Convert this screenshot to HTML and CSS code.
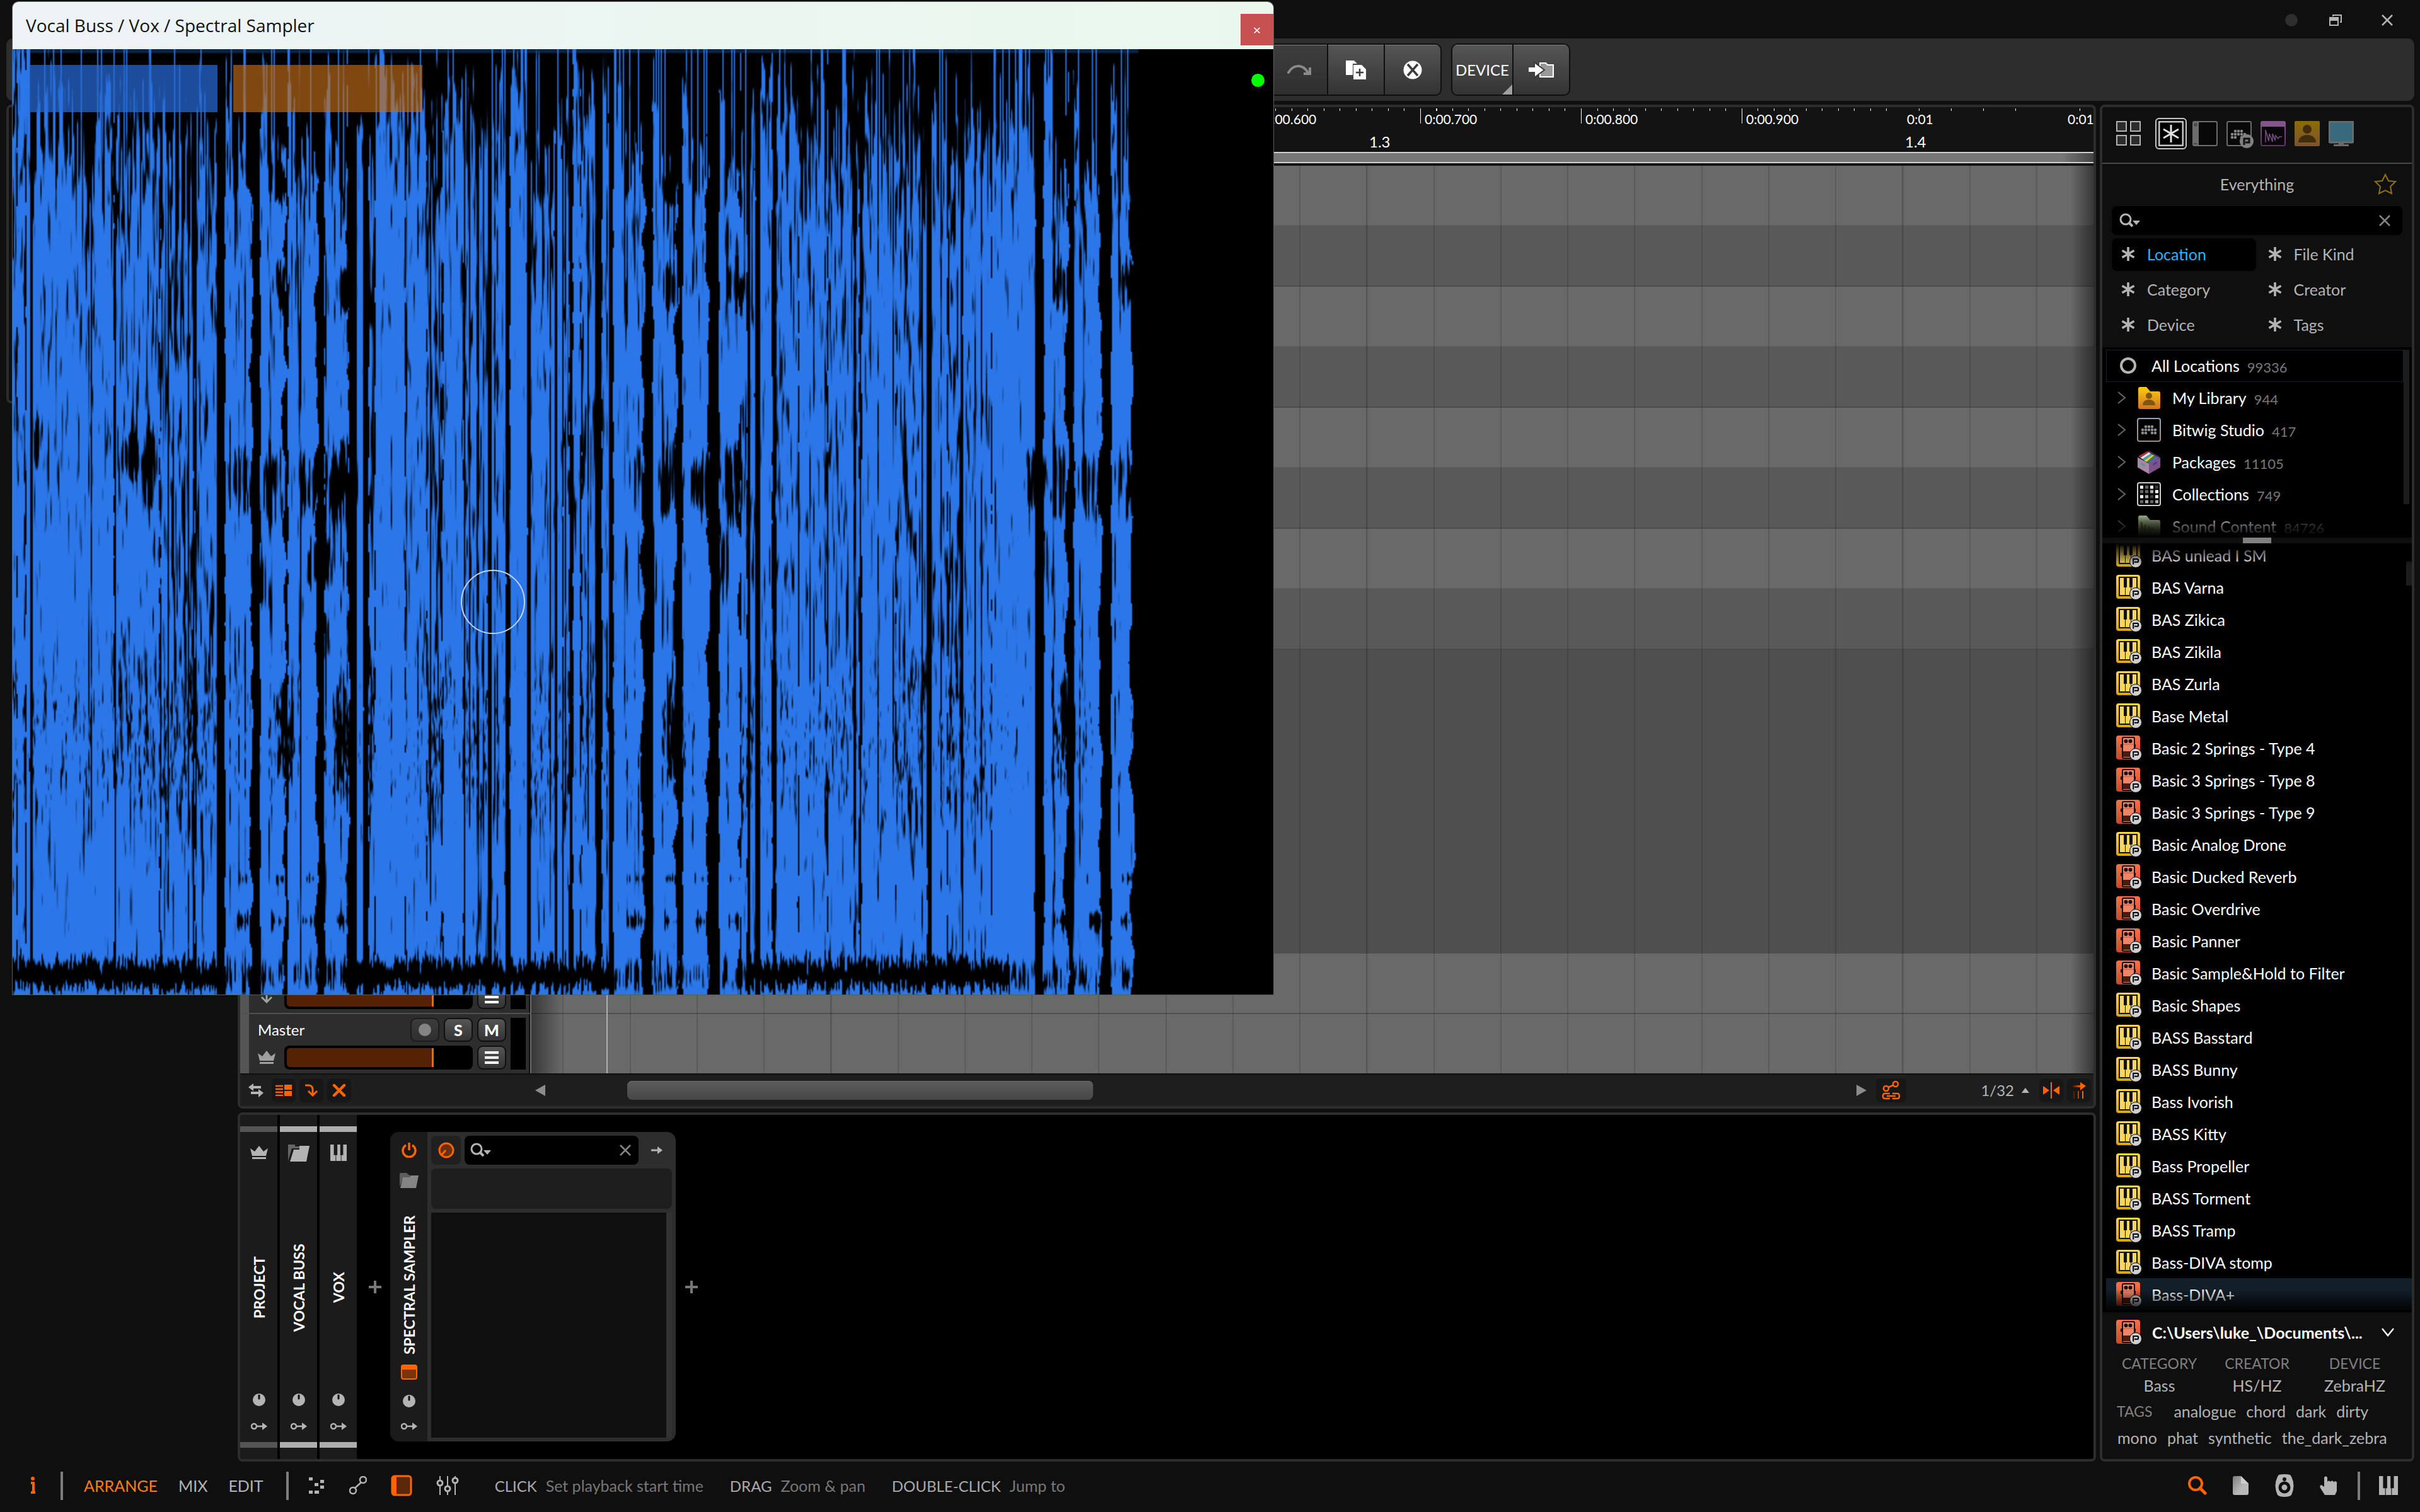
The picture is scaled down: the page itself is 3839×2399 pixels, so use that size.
FILE: index.html
```html
<!DOCTYPE html>
<html lang="en">

<head>
  <meta charset="UTF-8">
  <meta name="viewport" content="width=device-width, initial-scale=1">
  <title>Spectral Sampler</title>
  <link rel="stylesheet" href="styles.css">
</head>

<body>

  <!-- Icon set -->
  <svg class="defs" aria-hidden="true">
    <defs>
      <linearGradient id="gYellow" x1="0" y1="0" x2="0" y2="1"><stop offset="0" stop-color="#ffd940"/><stop offset="1" stop-color="#d8a800"/></linearGradient>
      <linearGradient id="gRed" x1="0" y1="0" x2="0" y2="1"><stop offset="0" stop-color="#fb7048"/><stop offset="1" stop-color="#c9482a"/></linearGradient>
      <linearGradient id="gLib" x1="0" y1="0" x2="0" y2="1"><stop offset="0" stop-color="#ffcc0c"/><stop offset="1" stop-color="#cf7426"/></linearGradient>
      <linearGradient id="gUser" x1="0" y1="0" x2="0" y2="1"><stop offset="0" stop-color="#8a6d06"/><stop offset="1" stop-color="#7e5230"/></linearGradient>
      <linearGradient id="gBit" x1="0" y1="0" x2="0" y2="1"><stop offset="0" stop-color="#8fa6c0"/><stop offset="1" stop-color="#a68a78"/></linearGradient>
      <linearGradient id="gPurple" x1="0" y1="0" x2="0" y2="1"><stop offset="0" stop-color="#835689"/><stop offset="1" stop-color="#60346a"/></linearGradient>
      <linearGradient id="gGreen" x1="0" y1="0" x2="0" y2="1"><stop offset="0" stop-color="#bdd0a4"/><stop offset="1" stop-color="#4f6041"/></linearGradient>
      <linearGradient id="gDoc" x1="0" y1="0" x2="1" y2="1"><stop offset="0" stop-color="#7c7c7c"/><stop offset=".6" stop-color="#b8b8b8"/></linearGradient>
      <linearGradient id="gFade" x1="0" y1="0" x2="1" y2="0"><stop offset="0" stop-color="#ff6400" stop-opacity="0"/><stop offset="1" stop-color="#ff6400"/></linearGradient>
    </defs>
    <symbol id="badge" viewBox="0 0 20 20">
      <circle cx="10" cy="10" r="9.5" fill="#cfcfcf" stroke="#000" stroke-width="1"/>
      <path d="M6.2 14.5V6h6.3a1.6 1.6 0 0 1 1.6 1.6v1.6a1.6 1.6 0 0 1-1.6 1.6H8" fill="none" stroke="#000" stroke-width="2"/>
    </symbol>
    <symbol id="keys" viewBox="0 0 42 42">
      <rect x="0" y="1" width="38" height="38" rx="4" fill="url(#gYellow)"/>
      <rect x="5" y="5" width="28" height="29" fill="#f6d65c" stroke="#14100a" stroke-width="2"/>
      <path d="M14.500 20v14M23.500 20v14" stroke="#14100a" stroke-width="1"/>
      <path d="M12 6h5v15h-5zM21 6h5v15h-5z" fill="#14100a"/>
      <use href="#badge" x="21" y="21" width="20" height="20"/>
    </symbol>
    <symbol id="pedal" viewBox="0 0 42 42">
      <rect x="0" y="1" width="38" height="38" rx="4" fill="url(#gRed)"/>
      <path d="M7 15h4v5H7zM27 15h4v5h-4z" fill="#180a06"/>
      <rect x="10" y="4" width="19" height="33" rx="2" fill="#ee8468" stroke="#180a06" stroke-width="2"/>
      <circle cx="15.500" cy="10" r="3" fill="#180a06"/><circle cx="22.500" cy="10" r="3" fill="#180a06"/>
      <path d="M11 15h17" stroke="#b55a42"/>
      <path d="M11 26h17v9H11z" fill="#4a1c10"/>
      <use href="#badge" x="21" y="21" width="20" height="20"/>
    </symbol>
    <symbol id="asterisk" viewBox="0 0 22 22"><path d="M11 0v22M1.500 5.500l19 11M1.500 16.500l19-11" stroke="currentColor" stroke-width="3.600"/></symbol>
    <symbol id="search" viewBox="0 0 34 24">
      <circle cx="10" cy="10" r="8" fill="none" stroke="currentColor" stroke-width="3"/>
      <path d="M15 15l6 6" stroke="currentColor" stroke-width="4"/><path d="M21 12h12l-6 7z" fill="currentColor"/>
    </symbol>
    <symbol id="cross" viewBox="0 0 20 20"><path d="M2 2l16 16M18 2L2 18" stroke="currentColor" stroke-width="2.500"/></symbol>
    <symbol id="chev" viewBox="0 0 14 20"><path d="M1 1l11 9-11 9" fill="none" stroke="currentColor" stroke-width="2"/></symbol>
    <symbol id="crown" viewBox="0 0 28 22"><path d="M0 4l7 5 7-9 7 9 7-5-3 12H3zM3 18h22v3H3z" fill="currentColor"/></symbol>
    <symbol id="folder" viewBox="0 0 34 28"><path d="M0 27V1h11v3h7v3H6z" fill="#666"/><path d="M3 28L9 9h9V3h16l-5 25z" fill="currentColor"/></symbol>
    <symbol id="folder2" viewBox="0 0 30 24"><path d="M0 22V2a2 2 0 0 1 2-2h9l5 4h9v5H5z" fill="#5c5c5c"/><path d="M1 24L5 7h11l2-3h12l-4 20z" fill="currentColor"/></symbol>
    <symbol id="piano" viewBox="0 0 28 28"><path d="M0 0h6v18h3v10H0zM10 28V18h2V0h5v18h1v10zM19 28V18h3V0h6v28z" fill="currentColor"/></symbol>
    <symbol id="knob" viewBox="0 0 20 20"><circle cx="10" cy="10" r="10" fill="currentColor"/><path d="M10 3v5" stroke="#111" stroke-width="3" stroke-linecap="round"/></symbol>
    <symbol id="route" viewBox="0 0 26 12"><circle cx="5" cy="6" r="4" fill="none" stroke="currentColor" stroke-width="2.500"/><path d="M9 6h11" stroke="currentColor" stroke-width="2.500"/><path d="M18 0l8 6-8 6z" fill="currentColor"/></symbol>
    <symbol id="plus" viewBox="0 0 20 20"><path d="M10 0v20M0 10h20" stroke="currentColor" stroke-width="4"/></symbol>
    <symbol id="menu" viewBox="0 0 22 22"><path d="M0 3h22M0 11h22M0 19h22" stroke="currentColor" stroke-width="4"/></symbol>
    <symbol id="bitdots" viewBox="0 0 26 16">
      <g fill="currentColor">
        <circle cx="8" cy="3" r="2.300"/><circle cx="13" cy="3" r="2.300"/><circle cx="18" cy="3" r="2.300"/>
        <circle cx="3" cy="8" r="2.300"/><circle cx="8" cy="8" r="2.300"/><circle cx="13" cy="8" r="2.300"/><circle cx="18" cy="8" r="2.300"/><circle cx="23" cy="8" r="2.300"/>
        <circle cx="3" cy="13" r="2.300"/><circle cx="8" cy="13" r="2.300"/><circle cx="18" cy="13" r="2.300"/><circle cx="23" cy="13" r="2.300"/>
      </g>
    </symbol>
  </svg>

  <header class="titlebar">
    <button class="win-btn" aria-label="Minimize"><svg width="20" height="20" viewBox="0 0 20 20"><circle cx="10" cy="10" r="10" fill="#2e2e2e"/></svg></button>
    <button class="win-btn" aria-label="Restore"><svg width="20" height="20" viewBox="0 0 20 20"><path d="M6 4V2h13v11h-2" fill="none" stroke="#b4b4b4" stroke-width="2"/><path d="M1 6h13v12H1z" fill="none" stroke="#b4b4b4" stroke-width="2"/><path d="M1 6h13v5H1z" fill="#b4b4b4"/></svg></button>
    <button class="win-btn" aria-label="Close"><svg class="c-light" width="20" height="20"><use href="#cross"/></svg></button>
  </header>

  <div class="toolbar">
    <div class="btn-group">
      <button class="dim" aria-label="Undo"></button>
      <button class="dim" aria-label="Redo"><svg width="38" height="18" viewBox="0 0 38 18"><path d="M2 13C9 1 23-2 33 13" fill="none" stroke="#8a8a8a" stroke-width="4" stroke-linecap="round"/><path d="M26 15h10V5" fill="none" stroke="#8a8a8a" stroke-width="4"/></svg></button>
      <button aria-label="Duplicate"><svg width="34" height="32" viewBox="0 0 34 32"><path d="M1 1h13l5 5h-7v18H1z" fill="#fff"/><path d="M13 8h13l7 7v16H13z" fill="#fff"/><path d="M23 14v12M17 20h12" stroke="#3c3c3c" stroke-width="2.500"/></svg></button>
      <button aria-label="Delete"><svg width="30" height="30" viewBox="0 0 30 30"><circle cx="15" cy="15" r="14.500" fill="#fff"/><path d="M7 6l16 18M23 6L7 24" stroke="#3c3c3c" stroke-width="3.500"/></svg></button>
    </div>
    <div class="btn-group">
      <button class="device-btn">DEVICE</button>
      <button aria-label="Insert"><svg width="40" height="26" viewBox="0 0 40 26"><path d="M18 2h9l3 3h9v19H18z" fill="#999" stroke="#fff" stroke-width="2"/><path d="M9 1l16 12L9 25z" fill="#fff" stroke="#3c3c3c" stroke-width="2"/><path d="M0 9h11v7H0z" fill="#fff"/></svg></button>
    </div>
  </div>

  <main class="workspace">
    <aside class="inspector panel"></aside>

    <section class="center">
      <div class="arranger panel">
        <div class="ruler">
          <div class="seconds">
            <span>0:00.600</span><span>0:00.700</span><span>0:00.800</span><span>0:00.900</span><span class="wide">0:01</span><span class="wide">0:01</span>
          </div>
          <div class="beat-labels"><span>1.3</span><span>1.4</span></div>
          <div class="loop-bar"></div>
        </div>
        <div class="lanes">
          <div class="lane"></div>
          <div class="lane odd"></div>
          <div class="lane"></div>
          <div class="lane odd"></div>
          <div class="lane"></div>
          <div class="lane odd"></div>
          <div class="lane"></div>
          <div class="lane odd"></div>
          <div class="lane empty"></div>
          <div class="lane lined">
            <div class="track">
              <span class="track-name">FX</span>
              <div class="track-btns"><button class="sq">S</button><button class="sq">M</button></div>
              <svg class="c-grey" width="28" height="22" viewBox="0 0 28 22"><path d="M14 0v19M6 11l8 8 8-8" fill="none" stroke="currentColor" stroke-width="3"/></svg>
              <div class="fader"><div class="fill"></div></div>
              <button class="sq" aria-label="Options"><svg width="22" height="22"><use href="#menu"/></svg></button>
              <div class="meter"></div>
            </div>
          </div>
          <div class="lane lined last">
            <div class="track">
              <span class="track-name">Master</span>
              <div class="track-btns">
                <button class="sq off" aria-label="Record"><svg width="20" height="20"><circle cx="10" cy="10" r="10" fill="#848484"/></svg></button>
                <button class="sq">S</button>
                <button class="sq">M</button>
              </div>
              <svg class="c-grey" width="28" height="22"><use href="#crown"/></svg>
              <div class="fader"><div class="fill"></div></div>
              <button class="sq" aria-label="Options"><svg width="22" height="22"><use href="#menu"/></svg></button>
              <div class="meter"></div>
            </div>
          </div>
          <div class="grid-lines">
            <div class="beats"><i></i><i></i><i></i><i></i></div>
            <div class="playhead"></div>
          </div>
        </div>
        <div class="arr-bar">
          <button class="flat" aria-label="Swap"><svg class="c-light" width="24" height="22" viewBox="0 0 24 22"><path d="M0 6l8-6v4h12v4H8v4zM24 15l-8-6v4H4v4h12v5z" fill="currentColor"/></svg></button>
          <button class="flat on" aria-label="Tracks"><svg width="26" height="18" viewBox="0 0 26 18"><path d="M0 2h12M0 7h12M0 12h12M0 17h12" stroke="currentColor" stroke-width="2.500"/><path d="M14 0h12v8H14zM14 10h12v8H14z" fill="currentColor"/></svg></button>
          <button class="flat on" aria-label="Follow"><svg width="22" height="20" viewBox="0 0 22 20"><path d="M1 2h6c4 0 6 3 6 7v8M6 11l7 7 7-7" fill="none" stroke="currentColor" stroke-width="3"/></svg></button>
          <button class="flat on" aria-label="Clear"><svg width="22" height="20" viewBox="0 0 22 20"><path d="M3 2l16 16M19 2L3 18" stroke="currentColor" stroke-width="4.500" stroke-linecap="round"/></svg></button>
          <svg class="tri-left" width="16" height="18" viewBox="0 0 16 18"><path d="M16 0v18L0 9z" fill="#8c8c8c"/></svg>
          <div class="scroll"><div class="thumb"></div></div>
          <svg width="16" height="18" viewBox="0 0 16 18"><path d="M0 0v18l16-9z" fill="#8c8c8c"/></svg>
          <button class="flat on link" aria-label="Link automation"><svg width="30" height="32" viewBox="0 0 30 32"><g fill="none" stroke="currentColor" stroke-width="2.500"><circle cx="7" cy="13" r="4"/><circle cx="22" cy="6" r="4"/><path d="M11 11l7-3M13 21H5a3 3 0 0 0-3 3v2a3 3 0 0 0 3 3h8M17 21h8a3 3 0 0 1 3 3v2a3 3 0 0 1-3 3h-8M8 25h14"/></g></svg></button>
          <button class="snap">1/32 <svg width="12" height="8" viewBox="0 0 12 8"><path d="M0 8l6-8 6 8z" fill="currentColor"/></svg></button>
          <button class="flat on" aria-label="Snap"><svg width="26" height="26" viewBox="0 0 26 26"><path d="M0 6l10 7-10 7zM26 6l-10 7 10 7z" fill="currentColor"/><path d="M13 0v26" stroke="currentColor" stroke-width="2"/></svg></button>
          <button class="flat on" aria-label="Snap offset"><svg width="22" height="26" viewBox="0 0 22 26"><path d="M0 5h14v3H0z" fill="url(#gFade)"/><path d="M13 0l9 6-9 7z" fill="currentColor"/><path d="M3 14v12" stroke="#50250a" stroke-width="2"/><path d="M10 14v12" stroke="#a8480a" stroke-width="2"/><path d="M17 14v12" stroke="currentColor" stroke-width="2"/></svg></button>
        </div>
      </div>

      <div class="devices panel">
        <div class="strip">
          <svg width="28" height="28" viewBox="0 -3 28 28"><use href="#crown" width="28" height="22"/></svg>
          <span class="vtext">PROJECT</span>
          <svg width="20" height="20"><use href="#knob"/></svg>
          <svg width="26" height="12"><use href="#route"/></svg>
        </div>
        <div class="strip lit">
          <svg width="34" height="28"><use href="#folder"/></svg>
          <span class="vtext">VOCAL BUSS</span>
          <svg width="20" height="20"><use href="#knob"/></svg>
          <svg width="26" height="12"><use href="#route"/></svg>
        </div>
        <div class="strip lit">
          <svg width="26" height="28"><use href="#piano"/></svg>
          <span class="vtext">VOX</span>
          <svg width="20" height="20"><use href="#knob"/></svg>
          <svg width="26" height="12"><use href="#route"/></svg>
        </div>
        <button class="add" aria-label="Add device before"><svg width="20" height="20"><use href="#plus"/></svg></button>
        <div class="device">
          <div class="device-side">
            <svg class="c-orange" width="24" height="24" viewBox="0 0 24 24"><path d="M7 4a10 10 0 1 0 10 0M12 0v12" fill="none" stroke="currentColor" stroke-width="3.500"/></svg>
            <svg class="c-mid" width="30" height="24"><use href="#folder2"/></svg>
            <span class="vtext">SPECTRAL SAMPLER</span>
            <svg width="26" height="24" viewBox="0 0 26 24"><rect x="1" y="1" width="24" height="22" rx="3" fill="#7a340c" stroke="#ff6400" stroke-width="2"/><path d="M1 2h24v6H1z" fill="#ff6400"/></svg>
            <svg width="20" height="20"><use href="#knob"/></svg>
            <svg width="26" height="12"><use href="#route"/></svg>
          </div>
          <div class="device-main">
            <div class="device-top">
              <button class="learn" aria-label="Remote controls"><svg width="26" height="26" viewBox="0 0 26 26"><circle cx="13" cy="13" r="11" fill="#6b3012" stroke="#ff6400" stroke-width="3"/><path d="M6 20l6-7" stroke="#ff6400" stroke-width="3"/></svg></button>
              <label class="search-box"><svg width="34" height="24"><use href="#search"/></svg><input type="text" aria-label="Search parameters"><svg width="20" height="20"><use href="#cross"/></svg></label>
              <svg class="c-light" width="18" height="12" viewBox="0 0 18 12"><path d="M0 6h12" stroke="currentColor" stroke-width="3"/><path d="M10 0l8 6-8 6z" fill="currentColor"/></svg>
            </div>
            <div class="device-slot"></div>
            <div class="device-list"></div>
          </div>
        </div>
        <button class="add" aria-label="Add device after"><svg width="20" height="20"><use href="#plus"/></svg></button>
      </div>
    </section>

    <aside class="browser panel">
      <nav class="tabs">
        <button aria-label="Grid"><svg width="40" height="40" viewBox="0 0 40 40"><path d="M1 1h15v15H1zM23 1h15v15H23zM1 23h15v15H1zM23 23h15v15H23z" fill="#2d2d2d" stroke="#b4b4b4" stroke-width="2"/></svg></button>
        <button class="sel" aria-label="Everything"><svg width="40" height="40" viewBox="0 0 40 40"><rect x="1" y="1" width="38" height="38" rx="2" fill="#000" stroke="#c4c4c4" stroke-width="3"/><path d="M20 6v28M8 13l24 14M8 27l24-14" stroke="#e0e0e0" stroke-width="3"/></svg></button>
        <button aria-label="Devices"><svg width="40" height="40" viewBox="0 0 40 40"><rect x="1" y="1" width="38" height="38" rx="2" fill="#080808" stroke="#6c6c6c" stroke-width="2"/><path d="M1 1h9v38H1z" fill="#6c6c6c"/><circle cx="5" cy="6" r="2" fill="none" stroke="#222"/><path d="M2 36h5" stroke="#222"/></svg></button>
        <button aria-label="Presets"><svg width="44" height="44" viewBox="0 0 44 44"><rect x="1" y="1" width="38" height="38" rx="2" fill="#080808" stroke="#6c6c6c" stroke-width="2"/><use class="c-mid" href="#bitdots" x="6" y="13" width="26" height="16"/><circle cx="32" cy="32" r="11" fill="#808080"/><path d="M28 38V28h8v6h-6" fill="none" stroke="#111" stroke-width="3"/></svg></button>
        <button aria-label="Samples"><svg width="40" height="40" viewBox="0 0 40 40"><rect x="1" y="1" width="38" height="38" rx="2" fill="#080808" stroke="url(#gPurple)" stroke-width="2"/><path d="M1 1h38v8H1z" fill="#835689"/><path d="M8 34V14l5 18 1-12 5 13V20l4 10 1-7 4 5 2-3 4 0" fill="none" stroke="#7b4a82" stroke-width="1.500"/></svg></button>
        <button aria-label="User"><svg width="40" height="40" viewBox="0 0 40 40"><rect width="40" height="40" rx="2" fill="url(#gUser)"/><circle cx="20" cy="13" r="7" fill="#3f2d0d"/><path d="M6 34c0-16 28-16 28 0z" fill="#3f2d0d"/></svg></button>
        <button aria-label="Computer"><svg width="40" height="40" viewBox="0 0 40 40"><rect x="1" y="1" width="38" height="33" rx="2" fill="#38697c" stroke="#6c6c6c" stroke-width="3"/><path d="M16 34h8v3h8v3H8v-3h8z" fill="#6c6c6c"/></svg></button>
      </nav>

      <div class="heading">
        <span>Everything</span>
        <button aria-label="Favorite"><svg width="36" height="34" viewBox="0 0 36 34"><path d="M18 2l5 10 11 1-8 8 2 11-10-5-10 5 2-11-8-8 11-1z" fill="none" stroke="#907112" stroke-width="2"/></svg></button>
      </div>

      <label class="search-box big"><svg width="34" height="24"><use href="#search"/></svg><input type="text" aria-label="Search browser"><svg width="20" height="20"><use href="#cross"/></svg></label>

      <div class="filters">
        <button class="active"><svg width="22" height="22"><use href="#asterisk"/></svg>Location</button>
        <button><svg width="22" height="22"><use href="#asterisk"/></svg>File Kind</button>
        <button><svg width="22" height="22"><use href="#asterisk"/></svg>Category</button>
        <button><svg width="22" height="22"><use href="#asterisk"/></svg>Creator</button>
        <button><svg width="22" height="22"><use href="#asterisk"/></svg>Device</button>
        <button><svg width="22" height="22"><use href="#asterisk"/></svg>Tags</button>
      </div>

      <ul class="locations">
        <li class="all"><svg width="26" height="26"><circle cx="13" cy="13" r="11" fill="none" stroke="#b4b4b4" stroke-width="4"/></svg>All Locations <small>99336</small></li>
        <li><svg class="c-dim" width="14" height="20"><use href="#chev"/></svg><svg class="ico" width="38" height="38" viewBox="0 0 38 38"><path d="M2 34V5a3 3 0 0 1 3-3h10l6 7h13a3 3 0 0 1 3 3v22a3 3 0 0 1-3 3H5a3 3 0 0 1-3-3z" fill="url(#gLib)"/><circle cx="19" cy="16" r="5" fill="#7d5710"/><path d="M9 31c0-12 20-12 20 0z" fill="#7d5710"/></svg>My Library <small>944</small></li>
        <li><svg class="c-dim" width="14" height="20"><use href="#chev"/></svg><svg class="ico" width="38" height="38" viewBox="0 0 38 38"><rect x="1" y="1" width="36" height="36" rx="3" fill="#000" stroke="url(#gBit)" stroke-width="2"/><use class="c-bit" href="#bitdots" x="6" y="11" width="26" height="16"/></svg>Bitwig Studio <small>417</small></li>
        <li><svg class="c-dim" width="14" height="20"><use href="#chev"/></svg><svg class="ico" width="40" height="40" viewBox="0 0 40 40"><path d="M2 11L20 1l18 10-18 12z" fill="#4a2b52"/><path d="M3 10L17 2l4 2L6 13z" fill="#b03040"/><path d="M6 13l14-9 3 2L9 15z" fill="#eee"/><path d="M9 15l14-9 3 2-14 10z" fill="#4aa3a8"/><path d="M12 18l14-10 3 1-13 11z" fill="#e8c83a"/><path d="M16 20L29 9l3 2-13 11z" fill="#3f7a58"/><path d="M19 22l13-11 6 1-17 12z" fill="#5b62b8"/><path d="M1 12l19 11v17L1 29z" fill="#a787a8"/><path d="M39 12L20 23v17l19-11z" fill="#7c5288"/><path d="M7 21l6 4v3l-6-4z" fill="#39a088"/><path d="M27 23l6-4v3l-6 4z" fill="#3c3f90"/></svg>Packages <small>11105</small></li>
        <li><svg class="c-dim" width="14" height="20"><use href="#chev"/></svg><svg class="ico" width="38" height="38" viewBox="0 0 38 38"><rect x="1" y="1" width="36" height="36" rx="3" fill="#000" stroke="#ccc" stroke-width="2"/><path d="M5 8h5M21 8h5M29 15h5M5 23h5M29 23h5" stroke="#fff" stroke-width="5"/><path d="M13 8h5M5 15h5M13 15h5M5 31h5M21 31h5" stroke="#666" stroke-width="5"/><path d="M21 15h5M13 23h5M29 31h5M13 31h5" stroke="#aaa" stroke-width="5"/><path d="M29 8h5M21 23h5" stroke="#3c3c3c" stroke-width="5"/></svg>Collections <small>749</small></li>
        <li><svg class="c-dim" width="14" height="20"><use href="#chev"/></svg><svg class="ico" width="38" height="38" viewBox="0 0 38 38"><path d="M2 34V5a3 3 0 0 1 3-3h10l6 7h13a3 3 0 0 1 3 3v22a3 3 0 0 1-3 3H5a3 3 0 0 1-3-3z" fill="url(#gGreen)"/><path d="M7 32V12l4 19 2-15 3 15 3-12 2 9 3-6 2 3h5" fill="none" stroke="#4f6a3a" stroke-width="2"/></svg>Sound Content <small>84726</small></li>
      </ul>

      <div class="splitter"><i></i></div>

      <ul class="results">
        <li><svg><use href="#keys"/></svg>BAS unlead I SM</li>
        <li><svg><use href="#keys"/></svg>BAS Varna</li>
        <li><svg><use href="#keys"/></svg>BAS Zikica</li>
        <li><svg><use href="#keys"/></svg>BAS Zikila</li>
        <li><svg><use href="#keys"/></svg>BAS Zurla</li>
        <li><svg><use href="#keys"/></svg>Base Metal</li>
        <li><svg><use href="#pedal"/></svg>Basic 2 Springs - Type 4</li>
        <li><svg><use href="#pedal"/></svg>Basic 3 Springs - Type 8</li>
        <li><svg><use href="#pedal"/></svg>Basic 3 Springs - Type 9</li>
        <li><svg><use href="#keys"/></svg>Basic Analog Drone</li>
        <li><svg><use href="#pedal"/></svg>Basic Ducked Reverb</li>
        <li><svg><use href="#pedal"/></svg>Basic Overdrive</li>
        <li><svg><use href="#pedal"/></svg>Basic Panner</li>
        <li><svg><use href="#pedal"/></svg>Basic Sample&amp;Hold to Filter</li>
        <li><svg><use href="#keys"/></svg>Basic Shapes</li>
        <li><svg><use href="#keys"/></svg>BASS Basstard</li>
        <li><svg><use href="#keys"/></svg>BASS Bunny</li>
        <li><svg><use href="#keys"/></svg>Bass Ivorish</li>
        <li><svg><use href="#keys"/></svg>BASS Kitty</li>
        <li><svg><use href="#keys"/></svg>Bass Propeller</li>
        <li><svg><use href="#keys"/></svg>BASS Torment</li>
        <li><svg><use href="#keys"/></svg>BASS Tramp</li>
        <li><svg><use href="#keys"/></svg>Bass-DIVA stomp</li>
        <li class="picked"><svg><use href="#pedal"/></svg>Bass-DIVA+</li>
      </ul>

      <div class="info">
        <div class="info-head">
          <svg width="42" height="42"><use href="#pedal"/></svg>
          <strong>C:\Users\luke_\Documents\...</strong>
          <button aria-label="Collapse"><svg width="20" height="14" viewBox="0 0 20 14"><path d="M1 1l9 11 9-11" fill="none" stroke="#fff" stroke-width="2.500"/></svg></button>
        </div>
        <dl class="meta">
          <div><dt>CATEGORY</dt><dd>Bass</dd></div>
          <div><dt>CREATOR</dt><dd>HS/HZ</dd></div>
          <div><dt>DEVICE</dt><dd>ZebraHZ</dd></div>
        </dl>
        <div class="tags">
          <span class="tags-label">TAGS</span><span>analogue</span><span>chord</span><span>dark</span><span>dirty</span>
        </div>
        <div class="tags"><span>mono</span><span>phat</span><span>synthetic</span><span>the_dark_zebra</span></div>
      </div>
    </aside>
  </main>

  <footer class="statusbar">
    <button class="info-btn" aria-label="Info"><svg width="8" height="28" viewBox="0 0 8 28"><circle cx="4" cy="3" r="3" fill="#ff6400"/><path d="M1 10h4v14M1 25h7" fill="none" stroke="#ff6400" stroke-width="4"/></svg></button>
    <i class="sep"></i>
    <button class="view on">ARRANGE</button>
    <button class="view">MIX</button>
    <button class="view">EDIT</button>
    <i class="sep"></i>
    <div class="foot-icons">
      <svg width="26" height="26" viewBox="0 0 26 26"><path d="M0 0h6v5H0zM9 9h6v5H9zM18 4h6v5h-6zM18 13h6v5h-6zM0 21h6v5H0zM9 21h7v5H9z" fill="currentColor"/></svg>
      <svg width="28" height="30" viewBox="0 0 28 30"><g fill="none" stroke="currentColor" stroke-width="2.500"><circle cx="6" cy="23" r="5"/><circle cx="22" cy="6" r="5"/><path d="M9 19l10-9"/></g></svg>
      <svg width="34" height="34" viewBox="0 0 34 34"><rect x="2" y="2" width="30" height="30" rx="4" fill="#5a2708" stroke="#ff6400" stroke-width="3"/><path d="M2 3h7v28H2z" fill="#ff6400"/></svg>
      <svg width="36" height="30" viewBox="0 0 36 30"><path d="M6 0v30M18 0v30M30 0v30" stroke="currentColor" stroke-width="2"/><g fill="#0f0f0f" stroke="currentColor" stroke-width="3"><circle cx="6" cy="11" r="4"/><circle cx="18" cy="20" r="4"/><circle cx="30" cy="7" r="4"/></g></svg>
    </div>
    <p class="hint"><b>CLICK</b>Set playback start time</p>
    <p class="hint"><b>DRAG</b>Zoom &amp; pan</p>
    <p class="hint"><b>DOUBLE-CLICK</b>Jump to</p>
    <div class="foot-right">
      <svg class="c-orange" width="30" height="30" viewBox="0 0 30 30"><circle cx="12" cy="12" r="10" fill="none" stroke="currentColor" stroke-width="4"/><path d="M19 19l8 8" stroke="currentColor" stroke-width="5" stroke-linecap="round"/></svg>
      <svg width="26" height="30" viewBox="0 0 26 30"><path d="M3 0h10l12 12v15a3 3 0 0 1-3 3H3a3 3 0 0 1-3-3V3a3 3 0 0 1 3-3z" fill="url(#gDoc)"/><path d="M13 0v12h12z" fill="#ccc"/></svg>
      <svg width="30" height="36" viewBox="0 0 30 36"><path d="M6 1q9-2 18 0l2 3q7 14 0 29l-3 2q-8 2-16 0l-3-2q-7-15 0-29z" fill="currentColor"/><circle cx="15" cy="8" r="3" fill="#0f0f0f"/><circle cx="15" cy="21" r="7" fill="none" stroke="#0f0f0f" stroke-width="5"/></svg>
      <svg width="28" height="30" viewBox="0 0 28 30"><path d="M7 17V3a2.500 2.500 0 0 1 5 0v7a2.500 2.500 0 0 1 5 0 2.500 2.500 0 0 1 5 0 2.500 2.500 0 0 1 5 2v12l-3 6H8L1 19c-2-4 1-6 3-4z" fill="currentColor"/></svg>
      <i class="sep"></i>
      <svg width="30" height="30"><use href="#piano"/></svg>
    </div>
  </footer>

  <!-- Floating plugin window -->
  <div class="plugin">
    <div class="plugin-title">
      <span>Vocal Buss / Vox / Spectral Sampler</span>
      <button aria-label="Close plugin">×</button>
    </div>
    <div class="plugin-body">
      <canvas id="spectrum" width="1000" height="500"></canvas>
      <div class="region blue"></div>
      <div class="region orange"></div>
      <div class="led"></div>
      <div class="brush"></div>
    </div>
  </div>

  <script src="spectrum.js"></script>
</body>

</html>
```
FILE: styles.css
```css
* {
  box-sizing: border-box;
}

body {
  margin: 0;
  height: 100vh;
  display: flex;
  flex-direction: column;
  background: #0f0f0f;
  color: #b4b4b4;
  font-family: Lato, sans-serif;
  font-size: 25px;
  line-height: 30px;
  overflow: hidden;
}

button {
  padding: 0;
  border: none;
  background: none;
  color: inherit;
  font: inherit;
}

input {
  min-width: 0;
  border: none;
  background: none;
  color: #fff;
  font: inherit;
}

ul, dl, dd, p {
  margin: 0;
  padding: 0;
  list-style: none;
}

svg {
  display: block;
  flex: none;
}

.defs {
  position: absolute;
  width: 0;
  height: 0;
}

.c-light { color: #b4b4b4; }
.c-grey { color: #a0a0a0; }
.c-mid { color: #848484; }
.c-dim { color: #666; }
.c-orange { color: #ff6400; }
.c-bit { color: #8c8c90; }

.panel {
  border: 4px solid #2d2d2d;
  border-radius: 8px;
  overflow: hidden;
}

/* Title bar and toolbar */
.titlebar {
  flex: none;
  height: 61px;
  display: flex;
  justify-content: flex-end;
  align-items: center;
  gap: 62px;
  padding: 2px 42px 0 0;
}

.win-btn:first-child {
  margin-right: -12px;
}

.toolbar {
  flex: none;
  height: 99px;
  margin: 0 9px 0 10px;
  padding: 8px 0 8px 1915px;
  display: flex;
  gap: 15px;
  background: #2d2d2d;
  border-radius: 10px;
}

.btn-group {
  display: flex;
  gap: 2px;
  background: #0f0f0f;
  border: 2px solid #0f0f0f;
  border-radius: 10px;
  overflow: hidden;
}

.btn-group button {
  width: 88px;
  display: flex;
  align-items: center;
  justify-content: center;
  background: linear-gradient(#555, #333);
  box-shadow: inset 0 1px 0 #808080;
  color: #fff;
}

.btn-group .dim {
  background: linear-gradient(#3e3e3e, #2e2e2e);
}

.btn-group .device-btn {
  width: 95px;
  position: relative;
  font-size: 24px;
}

.device-btn::after {
  content: "";
  position: absolute;
  right: 0;
  bottom: 0;
  border: 8px solid transparent;
  border-right-color: #a0a0a0;
  border-bottom-color: #a0a0a0;
}

/* Workspace */
.workspace {
  flex: 1;
  min-height: 0;
  margin: 6px 9px 0 10px;
  display: grid;
  grid-template-columns: 361px 1fr 499px;
  gap: 6px;
}

.inspector {
  height: 474px;
}

.center {
  min-width: 0;
  min-height: 0;
  display: flex;
  flex-direction: column;
  gap: 6px;
}

.arranger {
  flex: 1;
  min-height: 0;
  display: flex;
  flex-direction: column;
  background: #131313;
}

.ruler {
  flex: none;
  height: 93px;
  margin-left: 462px;
  padding-top: 2px;
  overflow: hidden;
  color: #fff;
}

.seconds {
  display: flex;
  height: 46px;
  margin-left: 1155px;
  font-size: 21px;
}

.seconds span {
  flex: none;
  width: 255px;
  padding: 2px 0 0 7px;
  background:
    linear-gradient(#fff, #fff) 0 0 / 1px 24px no-repeat,
    repeating-linear-gradient(90deg, #fff 0 1px, transparent 1px 10%) 0 0 / 100% 4px no-repeat;
}

.seconds .wide {
  background: repeating-linear-gradient(90deg, #fff 0 1px, transparent 1px 25%) 26px 0 / 80% 4px no-repeat;
}

.beat-labels {
  display: flex;
  height: 23px;
  margin-left: 1324px;
  font-size: 24px;
}

.beat-labels span {
  flex: none;
  width: 850px;
  padding: 0 0 0 5px;
  line-height: 14px;
}

.loop-bar {
  height: 18px;
  border-top: 2px solid #d0d0d0;
  border-bottom: 2px solid #d0d0d0;
  background: linear-gradient(90deg, #777 98%, #444);
}

.lanes {
  position: relative;
  flex: 1;
  min-height: 0;
  display: flex;
  flex-direction: column;
}

.lane {
  flex: none;
  height: 96px;
  background: #696969;
  border-bottom: 2px solid #5c5c5c;
}

.lane.odd {
  background: #595959;
  border-bottom-color: #4c4c4c;
}

.lane.empty {
  flex: 1;
  min-height: 0;
  background: #4f4f4f;
  border: none;
}

.lane.lined {
  border-bottom-color: #505050;
}

.lane.last {
  height: 94px;
  border: none;
}

/* Lines lie over all the lanes */
.grid-lines {
  position: absolute;
  inset: 0 0 0 462px;
  overflow: hidden;
}

.grid-lines::after {
  content: "";
  position: absolute;
  inset: 0;
  background:
    linear-gradient(90deg, #0007, transparent) 0 0 / 50px 100% no-repeat,
    linear-gradient(270deg, #0007, transparent) 100% 0 / 36px 100% no-repeat;
}

.beats {
  display: flex;
  height: 100%;
  margin-left: -376px;
}

.beats i {
  flex: none;
  width: 850px;
  background: repeating-linear-gradient(90deg, #0002 0 2px, transparent 2px 12.5%);
  border-left: 1px solid #0003;
}

.playhead {
  position: absolute;
  top: 0;
  bottom: 0;
  left: 119px;
  width: 2px;
  background: #b0b0b0;
}

.track {
  width: 460px;
  height: 94px;
  display: grid;
  grid-template-columns: 35px 1fr 46px 24px;
  grid-template-rows: 38px 38px;
  gap: 6px 7px;
  align-items: center;
  padding: 6px 5px 6px 14px;
  background: #2d2d2d;
  border-left: 14px solid #555;
  border-right: 2px solid #111;
  color: #fff;
}

.track-name {
  grid-column: 1 / 2;
  grid-row: 1;
  font-size: 24px;
}

.track-btns {
  grid-column: 2 / 4;
  grid-row: 1;
  display: flex;
  justify-content: flex-end;
  gap: 7px;
}

.meter {
  grid-column: 4;
  grid-row: 1 / 3;
  height: 82px;
  background: #000;
}

.sq {
  width: 46px;
  height: 38px;
  display: flex;
  align-items: center;
  justify-content: center;
  border: 2px solid #101010;
  border-radius: 9px;
  background: linear-gradient(#555, #333);
  font-weight: 900;
}

.sq.off {
  background: linear-gradient(#3c3c3c, #2e2e2e);
  border-color: #1c1c1c;
}

.fader {
  height: 38px;
  padding: 4px;
  background: #000;
  border-radius: 8px;
}

.fader .fill {
  width: 80%;
  height: 30px;
  background: #552204;
  border-right: 3px solid #ff6400;
  border-radius: 5px 0 0 5px;
}

.arr-bar {
  flex: none;
  height: 52px;
  display: flex;
  align-items: center;
  gap: 6px;
  padding: 0 4px 0 6px;
  background: #1e1e1e;
  border-top: 2px solid #111;
}

.flat {
  width: 38px;
  height: 38px;
  display: flex;
  align-items: center;
  justify-content: center;
  border-radius: 8px;
}

.flat.on {
  background: #171717;
  color: #ff6400;
}

.flat.link {
  width: 48px;
  margin: 0 112px 0 9px;
}

.tri-left {
  margin-left: 286px;
}

.scroll {
  flex: 1;
  padding-left: 124px;
}

.thumb {
  width: 38%;
  height: 30px;
  border-radius: 8px;
  background: linear-gradient(#5c5c5c, #474747);
  box-shadow: inset 0 1px 0 #6c6c6c;
}

.snap {
  display: flex;
  align-items: center;
  gap: 12px;
  margin-right: 10px;
  font-size: 24px;
}

/* Device panel */
.devices {
  flex: none;
  height: 554px;
  display: flex;
  background: #000;
}

.strip {
  width: 59px;
  margin-right: 4px;
  display: flex;
  flex-direction: column;
  align-items: center;
  gap: 26px;
  padding: 46px 0;
  color: #b4b4b4;
  background:
    linear-gradient(#555, #555) 0 18px / 100% 9px no-repeat,
    linear-gradient(#555, #555) 0 519px / 100% 9px no-repeat,
    #1b1b1b;
}

.strip.lit {
  background:
    linear-gradient(#aeaeae, #aeaeae) 0 18px / 100% 9px no-repeat,
    linear-gradient(#aeaeae, #aeaeae) 0 519px / 100% 9px no-repeat,
    #1b1b1b;
}

.vtext {
  flex: 1;
  margin-top: 32px;
  writing-mode: vertical-rl;
  transform: rotate(180deg);
  text-align: center;
  white-space: nowrap;
  color: #fff;
  font-weight: bold;
  font-size: 23px;
}

.add {
  width: 49px;
  display: flex;
  align-items: center;
  justify-content: center;
  color: #777;
}

.device {
  width: 453px;
  margin: 27px 0 28px;
  display: flex;
  background: #2d2d2d;
  border-radius: 14px;
  overflow: hidden;
}

.device-side {
  width: 59px;
  display: flex;
  flex-direction: column;
  align-items: center;
  gap: 24px;
  padding: 17px 0 18px;
  color: #b4b4b4;
  background: #1b1b1b;
}

.device-side .vtext {
  margin: 16px 0 -12px;
}

.device-main {
  flex: 1;
  min-width: 0;
  display: flex;
  flex-direction: column;
  gap: 6px;
  padding: 6px;
}

.device-top {
  display: flex;
  align-items: center;
  gap: 6px;
}

.device-top > svg {
  margin-left: 14px;
}

.learn {
  width: 47px;
  height: 46px;
  display: flex;
  align-items: center;
  justify-content: center;
  background: #202020;
  border-radius: 8px;
}

.search-box {
  width: 276px;
  height: 46px;
  display: flex;
  align-items: center;
  gap: 8px;
  padding: 0 11px 0 9px;
  background: #000;
  border-radius: 8px;
}

.search-box input {
  flex: 1;
}

.search-box svg:last-child {
  color: #848484;
}

.device-slot {
  height: 64px;
  background: #1e1e1e;
  border-radius: 8px;
}

.device-list {
  flex: 1;
  background: #0f0f0f;
  border-right: 9px solid #323232;
}

/* Browser */
.browser {
  min-height: 0;
  display: flex;
  flex-direction: column;
}

.tabs {
  flex: none;
  height: 90px;
  display: flex;
  align-items: center;
  gap: 14px;
  padding: 0 0 4px 22px;
  border-bottom: 2px solid #484848;
}

.tabs button {
  width: 40px;
  height: 40px;
}

.tabs .sel {
  width: 50px;
  height: 50px;
  margin: 0 -5px 0 8px;
  padding: 3px;
  border: 2px solid #c4c4c4;
  border-radius: 6px;
}

.heading {
  flex: none;
  height: 67px;
  display: grid;
  grid-template-columns: 1fr auto 1fr;
  align-items: center;
  padding: 0 24px 3px;
}

.heading span {
  grid-column: 2;
}

.heading button {
  justify-self: end;
}

.search-box.big {
  width: auto;
  margin: 0 15px 5px;
  padding: 0 18px 0 12px;
}

.filters {
  flex: none;
  display: grid;
  grid-template-columns: 1fr 1fr;
  gap: 4px;
  height: 173px;
  padding: 0 15px 9px;
  grid-auto-rows: 52px;
}

.filters button {
  display: flex;
  align-items: center;
  gap: 19px;
  padding: 0 0 2px 15px;
  border-radius: 8px;
}

.filters svg {
  color: #b4b4b4;
}

.filters .active {
  background: #000;
  color: #2eb3f8;
}

.locations {
  position: relative;
  flex: none;
  height: 302px;
  padding: 4px 4px 0 6px;
  overflow: hidden;
  background: #000;
  color: #fff;
}

.locations li {
  height: 51px;
  display: flex;
  align-items: center;
  padding: 0 0 2px 18px;
  margin-right: 9px;
}

.locations .all {
  border: 1px solid #16202c;
  gap: 24px;
  padding-left: 21px;
}

.locations .all small {
  margin-left: -12px;
}

.locations .ico {
  width: 38px;
  margin: 0 18px 0 17px;
}

.locations small {
  margin: 7px 0 0 12px;
  font-size: 22px;
  color: #777;
}

.locations::before {
  content: "";
  position: absolute;
  top: 4px;
  right: 4px;
  width: 9px;
  height: 245px;
  background: #1c1c1c;
}

.locations::after {
  content: "";
  position: absolute;
  inset: auto 0 0;
  height: 42px;
  background: linear-gradient(transparent, #000a 60%, #000);
}

.splitter {
  flex: none;
  height: 9px;
  display: flex;
  justify-content: center;
}

.splitter i {
  width: 45px;
  background: #808080;
}

.results {
  position: relative;
  flex: 1;
  min-height: 0;
  overflow: hidden;
  padding-left: 6px;
  background: #000;
  color: #fff;
}

.results li {
  height: 51px;
  display: flex;
  align-items: center;
  gap: 14px;
  padding-left: 16px;
}

.results li:first-child {
  margin-top: -7px;
}

.results svg {
  width: 42px;
  height: 42px;
}

.results .picked {
  background: #121f29;
}

.results::before {
  content: "";
  position: absolute;
  top: 29px;
  right: 0;
  width: 9px;
  height: 38px;
  background: #1c1c1c;
}

.results::after {
  content: "";
  position: absolute;
  inset: 0;
  background:
    linear-gradient(#000, transparent) 0 0 / 100% 36px no-repeat,
    linear-gradient(transparent, #000) 0 100% / 100% 36px no-repeat;
}

.info {
  flex: none;
  height: 233px;
}

.info-head {
  height: 64px;
  display: flex;
  align-items: center;
  gap: 15px;
  padding: 0 28px 0 22px;
  color: #fff;
}

.info-head strong {
  flex: 1;
  white-space: nowrap;
}

.meta {
  display: grid;
  grid-template-columns: repeat(3, 1fr);
  height: 72px;
  padding: 0 13px;
  text-align: center;
}

.meta dt {
  height: 36px;
  line-height: 35px;
  font-size: 23px;
  color: #808080;
}

.meta dd {
  height: 34px;
  line-height: 33px;
}

.tags {
  display: flex;
  gap: 16px;
  height: 42px;
  line-height: 42px;
  padding-left: 24px;
}

.tags-label {
  margin: 0 18px 0 -1px;
  font-size: 23px;
  color: #808080;
}

/* Status bar */
.statusbar {
  flex: none;
  height: 80px;
  display: flex;
  align-items: center;
  padding: 0 35px 4px 48px;
}

.sep {
  width: 4px;
  height: 45px;
  background: #7c7c7c;
}

.info-btn {
  margin-right: 40px;
}

.view {
  margin-left: 33px;
}

.view.on {
  color: #ff7d0f;
}

.view + .sep {
  margin-left: 36px;
}

.foot-icons {
  display: flex;
  align-items: center;
  gap: 38px;
  margin: 0 57px 0 32px;
}

.hint {
  margin-right: 42px;
  color: #777;
}

.hint b {
  margin-right: 14px;
  color: #aaa;
  font-weight: normal;
  font-size: 24px;
}

.foot-right {
  display: flex;
  align-items: center;
  gap: 41px;
  margin-left: auto;
}

.foot-right .sep {
  margin: 0 -11px 0 -9px;
}

/* Floating plugin window */
.plugin {
  position: absolute;
  top: 2px;
  left: 19px;
  width: 2002px;
  height: 1577px;
  display: flex;
  flex-direction: column;
  border: 1px solid #5c5c5c;
  border-radius: 10px 10px 0 0;
  background: #000;
  overflow: hidden;
}

.plugin-title {
  flex: none;
  height: 75px;
  display: flex;
  align-items: center;
  justify-content: space-between;
  padding: 0 0 2px 21px;
  background: linear-gradient(90deg, #eef3f6, #e9f8ec);
  color: #111;
  font-family: "Open Sans", sans-serif;
  font-size: 28px;
}

.plugin-title button {
  width: 52px;
  height: 50px;
  margin-top: 14px;
  background: #c75050;
  color: #fff;
  font-size: 22px;
}

.plugin-body {
  position: relative;
  flex: 1;
  min-height: 0;
}

#spectrum {
  display: block;
  width: 100%;
  height: 100%;
}

.region {
  position: absolute;
  top: 25px;
  height: 75px;
}

.region.blue {
  left: 28px;
  width: 297px;
  background: rgba(41, 110, 220, 0.7);
}

.region.orange {
  left: 350px;
  width: 300px;
  background: rgba(195, 110, 25, 0.65);
}

.led {
  position: absolute;
  top: 39px;
  right: 14px;
  width: 21px;
  height: 21px;
  border-radius: 50%;
  background: #0f0;
}

.brush {
  position: absolute;
  top: 826px;
  left: 711px;
  width: 102px;
  height: 102px;
  border: 2px solid #c4d4ee;
  border-radius: 50%;
}
```
FILE: spectrum.js
```js
const canvas = document.getElementById('spectrum');
const ctx = canvas.getContext('2d');
const W = canvas.width;
const H = canvas.height;

// window coordinates of the canvas corner, and px per cell
const X0 = 20, Y0 = 78, SX = 2, SY = 3;

// x start, x end, darkness, top edge, roughness of the top, hit (1) or voice (0)
const bands = [
  [20, 25, 0.25, 70, 20, 0], [27, 39, 0.1, 70, 20, 0], [41, 47, 0.05, 60, 0, 0],
  [52, 180, 0.14, 170, 160, 0], [184, 252, 0.23, 180, 160, 0], [255, 305, 0.27, 220, 180, 0],
  [309, 343, 0.24, 210, 160, 0],
  [357, 398, 0.1, 240, 100, 1], [413, 450, 0.1, 220, 90, 1], [457, 501, 0.1, 230, 90, 1],
  [515, 551, 0.1, 230, 90, 1], [566, 575, 0.05, 200, 40, 0],
  [585, 593, 0.35, 220, 60, 0], [595, 642, 0.05, 120, 120, 0], [644, 676, 0.1, 150, 140, 0],
  [677, 700, 0.32, 200, 150, 0], [703, 734, 0.13, 140, 100, 0], [738, 773, 0.2, 150, 120, 0],
  [780, 801, 0.14, 150, 110, 0], [809, 835, 0.06, 100, 60, 0], [842, 879, 0.2, 240, 110, 0],
  [884, 891, 0.12, 180, 90, 0], [894, 902, 0.2, 180, 80, 0], [909, 920, 0.1, 80, 40, 0],
  [923, 945, 0.22, 140, 60, 0], [955, 965, 0.1, 100, 50, 0],
  [973, 1019, 0.06, 210, 120, 1], [1036, 1072, 0.1, 230, 90, 1], [1083, 1122, 0.08, 230, 90, 1],
  [1141, 1173, 0.1, 250, 90, 1], [1176, 1184, 0.2, 200, 60, 0], [1190, 1197, 0.2, 150, 50, 0],
  [1206, 1224, 0.12, 120, 60, 0], [1231, 1265, 0.2, 140, 100, 0], [1267, 1312, 0.11, 150, 140, 0],
  [1314, 1362, 0.22, 170, 140, 0], [1367, 1420, 0.13, 170, 140, 0], [1421, 1470, 0.25, 180, 140, 0],
  [1478, 1502, 0.14, 150, 100, 0], [1504, 1525, 0.3, 210, 90, 0], [1528, 1572, 0.18, 170, 130, 0],
  [1574, 1641, 0.05, 170, 140, 0],
  [1656, 1691, 0.08, 240, 90, 1], [1704, 1744, 0.08, 230, 90, 1], [1763, 1794, 0.08, 250, 90, 1]
];

// dark patches: x, y, half width, half height
const patches = [
  [208, 725, 14, 32], [236, 735, 10, 60], [60, 700, 6, 40],
  [385, 762, 24, 46], [434, 765, 20, 55], [498, 765, 26, 52], [543, 770, 20, 62],
  [1016, 765, 16, 50], [1062, 765, 20, 56], [1115, 765, 25, 50], [1162, 765, 16, 55],
  [1640, 760, 16, 44], [1682, 765, 18, 50], [1735, 765, 22, 50], [1788, 765, 12, 55],
  [446, 450, 12, 34], [545, 455, 12, 34], [1064, 455, 12, 36], [1166, 450, 12, 36],
  [1683, 455, 12, 36], [1786, 450, 12, 36], [394, 260, 10, 30], [440, 290, 14, 30], [1064, 290, 14, 30],
  [410, 905, 12, 60], [505, 895, 20, 44], [1030, 900, 12, 60], [1140, 900, 12, 60], [1655, 900, 12, 60],
  [510, 1015, 12, 36], [450, 1160, 16, 90], [540, 1180, 12, 100], [1070, 1160, 16, 90], [1690, 1160, 16, 90]
];

let seed = 7;
function rand() {
  seed = (seed * 1664525 + 1013904223) >>> 0;
  return seed / 4294967296;
}

// one strip of smooth noise for each column
function strip(step) {
  const n = Math.ceil(H / step) + 3;
  const pts = [];
  for (let i = 0; i < n; i++) pts.push(rand());
  const shift = rand();
  return y => {
    const t = y / step + shift;
    const i = Math.floor(t);
    const f = t - i;
    const s = f * f * (3 - 2 * f);
    return pts[i] * (1 - s) + pts[i + 1] * s;
  };
}

const ramp = (a, b, v) => Math.min(1, Math.max(0, (v - a) / (b - a)));

const long = [], short = [], tops = [], bias = [];
for (let x = 0; x < W; x++) {
  long.push(strip(13 + rand() * 16));
  short.push(strip(5));
  tops.push(rand());
  bias.push(rand());
}
const edges = bands.map(() => [strip(17), strip(7)]);

function level(cx, cy) {
  const x = X0 + cx * SX;
  const y = Y0 + cy * SY;
  let band = null;
  for (let i = 0; i < bands.length; i++) {
    const b = bands[i];
    const w = (edges[i][0](cy) - 0.5) * 9 + (edges[i][1](cy) - 0.5) * 4;
    const soft = b[5] ? w : w * 0.2;
    if (x >= b[0] - 1 - soft * 0.3 && x <= b[1] + soft) band = b;
  }
  if (!band) return 0;

  const p = (x - band[0]) / (band[1] - band[0]);
  let dark = band[2] * 1.15 + 0.02;
  if (band[5]) dark = 0.06 + (Math.abs(p - 0.4) < 0.06 ? 0.25 : 0);
  // thin dark lines that run the whole height
  if (bias[cx] > 0.93) dark += band[2] * 1.6 + 0.15;

  let top = band[3] + (tops[cx] - 0.4) * band[4] * 1.4;
  if (band[5]) top += p < 0.25 ? -110 : 30;
  const spike = tops[cx] < 0.16;
  if (spike) top = 60;
  dark += (1 - ramp(top, top + 240, y)) * (spike ? 0.1 : 0.26);
  if (y < top) dark += (top - y) / 60;

  let n = long[cx](cy) * 0.75 + long[Math.max(0, cx - 1)](cy) * 0.25;
  const grain = ramp(980, 1130, y) * (1 - ramp(1240, 1350, y));
  n = n * (1 - grain * 0.4) + short[cx](cy) * grain * 0.4;
  dark += grain * (band[5] ? 0.05 : 0.08);
  if (y > 1300) {
    dark *= 1 - ramp(1300, 1360, y) * 0.5;
    if (band[5] && p > 0.45) {
      dark += Math.max(0, 1 - Math.abs(y - 1393) / 14) * 0.5 * ramp(0.3, 0.6, long[cx](460));
      dark += Math.max(0, 1 - Math.abs(y - 1460) / 22) * 0.6;
    }
  }
  if (x < 252) dark *= 1 - 0.4 * ramp(740, 820, y) * (1 - ramp(960, 1100, y));

  for (const q of patches) {
    const dx = (x - q[0]) / q[2];
    const dy = (y - q[1]) / q[3];
    const r = dx * dx + dy * dy;
    if (r < 1.8) dark += (1.8 - r) * 0.34;
  }

  // rumble band near the bottom
  const low = y + (tops[cx] - 0.5) * 18 + (bias[cx] - 0.5) * 10;
  const hits = (x > 355 && x < 545) || (x > 965 && x < 1190) || x > 1600;
  dark += ramp(1512, 1540, low) * (1 - ramp(1556, 1572, low)) * (hits ? 0.4 : 0.95);
  return Math.min(1, Math.max(0, (n - dark) * 5 + 0.5));
}

const img = ctx.createImageData(W, H);
for (let y = 0; y < H; y++) {
  for (let x = 0; x < W; x++) {
    let v = level(x, y);
    // faint line along the top edge
    if (y < 2 && x < 893) v = Math.max(v, 0.3);
    const o = (y * W + x) * 4;
    img.data[o] = 43 * v;
    img.data[o + 1] = 118 * v;
    img.data[o + 2] = 232 * v;
    img.data[o + 3] = 255;
  }
}
ctx.putImageData(img, 0, 0);
```
